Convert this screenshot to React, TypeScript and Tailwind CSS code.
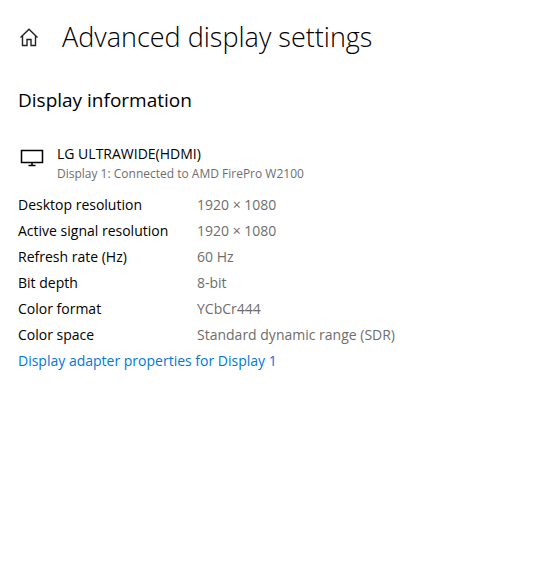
import React from "react";

const details = [
  { label: "Desktop resolution", value: "1920 × 1080" },
  { label: "Active signal resolution", value: "1920 × 1080" },
  { label: "Refresh rate (Hz)", value: "60 Hz" },
  { label: "Bit depth", value: "8-bit" },
  { label: "Color format", value: "YCbCr444" },
  { label: "Color space", value: "Standard dynamic range (SDR)" },
];

const HomeIcon = () => (
  <svg width="20" height="20" viewBox="0 0 20 20" fill="none" stroke="#222222" strokeWidth="1.4">
    <path d="M2.5 10.5 11 2.2l8.5 8.3" />
    <path d="M4.5 9v9.5h4.5v-6h4v6h4.5V9" />
  </svg>
);

const MonitorIcon = () => (
  <svg width="24" height="18" viewBox="0 0 24 18" fill="none" stroke="currentColor" strokeWidth="1.5">
    <path d="M1.5 1.5h21v12h-21z" />
    <path d="M12 13.5v3M8.5 16.5h7" />
  </svg>
);

const App = () => {
  return (
    <main className="min-h-screen bg-white px-[18px] pt-4 font-['Open_Sans','Noto_Sans',sans-serif] text-black">
      <header className="flex items-center gap-6">
        <button type="button" aria-label="Home" className="flex w-5 justify-center">
          <HomeIcon />
        </button>
        <h1 className="text-[27px] leading-[42px] font-light">Advanced display settings</h1>
      </header>

      <section className="pt-7">
        <h2 className="text-[19px] leading-7">Display information</h2>

        <div className="flex gap-[11px] pt-[30px]">
          <div className="flex w-7 justify-center pt-[5px]">
            <MonitorIcon />
          </div>
          <div>
            <p className="text-sm leading-5">LG ULTRAWIDE(HDMI)</p>
            <p className="text-xs leading-5 text-[#6e6e6e]">Display 1: Connected to AMD FirePro W2100</p>
          </div>
        </div>

        <table className="mt-2 text-sm leading-[26px]">
          <tbody>
            {details.map((item) => (
              <tr key={item.label}>
                <th scope="row" className="w-[179px] p-0 text-left font-normal">{item.label}</th>
                <td className="p-0 text-[#6e6e6e]">{item.value}</td>
              </tr>
            ))}
          </tbody>
        </table>

        <a href="#adapter" className="inline-block text-sm leading-[26px] text-[#0078d7]">
          Display adapter properties for Display 1
        </a>
      </section>
    </main>
  );
};

export default App;
